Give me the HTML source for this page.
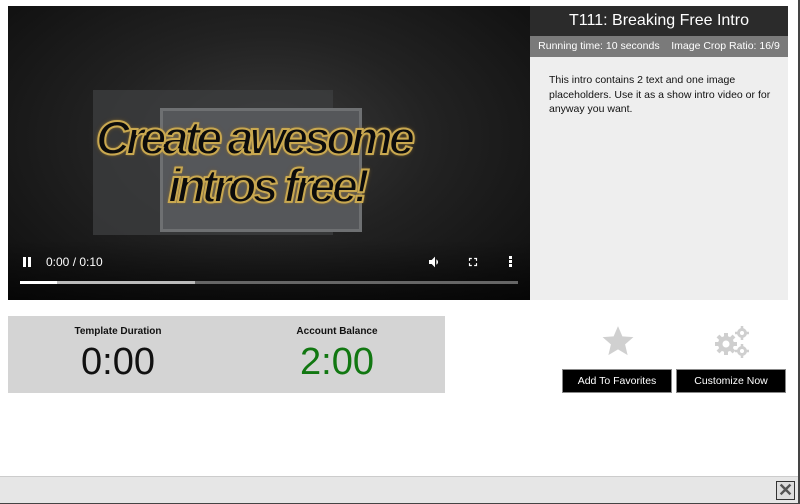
<!DOCTYPE html>
<html><head><style>
body{margin:0;width:800px;height:504px;background:#fff;font-family:"Liberation Sans",sans-serif;position:relative;overflow:hidden}
.abs{position:absolute}
.hl{font:italic bold 47px/44px 'Liberation Sans',sans-serif;color:#0c0c0c;letter-spacing:-4px;-webkit-text-stroke:2px #c9a850;text-shadow:0 0 2px #e0c070,0 0 5px #806020}
</style></head><body>
<div class="abs" style="left:0;top:0;width:798px;height:502px;border-right:2px solid #444;border-bottom:2px solid #444;box-sizing:content-box"></div>
<div class="abs" style="left:8px;top:6px;width:522px;height:294px;background:radial-gradient(ellipse at 50% 45%,#3a3a3a 0%,#222 45%,#0e0e0e 100%)"></div>
<div class="abs" style="left:93px;top:90px;width:240px;height:145px;background:#3c3d3f;opacity:.8"></div>
<div class="abs" style="left:160px;top:108px;width:196px;height:118px;background:#55575a;border:3px solid #6e7072"></div>
<div class="abs hl" style="left:96px;top:116px">Create awesome</div>
<div class="abs hl" style="left:168px;top:164px">intros free!</div>
<div class="abs" style="left:8px;top:240px;width:522px;height:60px;background:linear-gradient(transparent,rgba(0,0,0,.6))"></div>
<div class="abs" style="left:23px;top:257px;width:3px;height:10px;background:#fff"></div>
<div class="abs" style="left:28px;top:257px;width:3px;height:10px;background:#fff"></div>
<div class="abs" style="left:46px;top:255px;color:#fff;font-size:12px">0:00 / 0:10</div>
<svg class="abs" style="left:427px;top:254px" width="16" height="16" viewBox="0 0 24 24"><path fill="#fff" d="M3 9v6h4l5 5V4L7 9H3zm13.5 3A4.5 4.5 0 0014 8v8a4.5 4.5 0 002.5-4z"/></svg>
<svg class="abs" style="left:466px;top:255px" width="14" height="14" viewBox="0 0 24 24"><path fill="#fff" d="M7 14H5v5h5v-2H7v-3zm-2-4h2V7h3V5H5v5zm12 7h-3v2h5v-5h-2v3zM14 5v2h3v3h2V5h-5z"/></svg>
<div class="abs" style="left:509px;top:256px;width:3px;height:3px;background:#fff;box-shadow:0 4px #fff,0 8px #fff"></div>
<div class="abs" style="left:20px;top:281px;width:498px;height:3px;background:#666"></div>
<div class="abs" style="left:20px;top:281px;width:175px;height:3px;background:#bbb"></div>
<div class="abs" style="left:20px;top:281px;width:37px;height:3px;background:#fff"></div>
<div class="abs" style="left:530px;top:6px;width:258px;height:30px;background:#2b2b2b;color:#fff;font-size:16px;line-height:30px;text-align:center">T111: Breaking Free Intro</div>
<div class="abs" style="left:530px;top:36px;width:258px;height:21px;background:#7a7a7a;color:#fff;font-size:10.5px;line-height:21px;text-align:center">Running time: 10 seconds &nbsp;&nbsp; Image Crop Ratio: 16/9</div>
<div class="abs" style="left:530px;top:57px;width:258px;height:243px;background:#eee"></div>
<div class="abs" style="left:549px;top:73px;width:225px;color:#111;font-size:10.5px;line-height:14.5px">This intro contains 2 text and one image placeholders. Use it as a show intro video or for anyway you want.</div>
<div class="abs" style="left:8px;top:316px;width:437px;height:77px;background:#d4d4d4"></div>
<div class="abs" style="left:8px;top:326px;width:220px;text-align:center;font-size:10px;font-weight:bold;color:#111">Template Duration</div>
<div class="abs" style="left:8px;top:341px;width:220px;text-align:center;font-size:38px;color:#111">0:00</div>
<div class="abs" style="left:228px;top:326px;width:218px;text-align:center;font-size:10px;font-weight:bold;color:#111">Account Balance</div>
<div class="abs" style="left:228px;top:341px;width:218px;text-align:center;font-size:38px;color:#117711">2:00</div>
<svg class="abs" style="left:601px;top:324px" width="34" height="34" viewBox="0 0 24 24"><path fill="#d0d0d0" d="M12 1.5l3.1 7.2 7.8.6-5.9 5.1 1.8 7.6L12 17.9 5.2 22l1.8-7.6L1.1 9.3l7.8-.6z"/></svg>
<svg class="abs" style="left:712px;top:324px" width="40" height="36" viewBox="0 0 40 36">
<g fill="#cfcfcf"><circle cx="14" cy="20" r="8"/><g stroke="#cfcfcf" stroke-width="4"><line x1="14" y1="9" x2="14" y2="31"/><line x1="3" y1="20" x2="25" y2="20"/><line x1="6" y1="12" x2="22" y2="28"/><line x1="22" y1="12" x2="6" y2="28"/></g><circle cx="14" cy="20" r="3.5" fill="#fff"/>
<circle cx="30" cy="9" r="5"/><g stroke="#cfcfcf" stroke-width="2.5"><line x1="30" y1="2" x2="30" y2="16"/><line x1="23" y1="9" x2="37" y2="9"/></g><circle cx="30" cy="9" r="2" fill="#fff"/>
<circle cx="30" cy="27" r="5"/><g stroke="#cfcfcf" stroke-width="2.5"><line x1="30" y1="20" x2="30" y2="34"/><line x1="23" y1="27" x2="37" y2="27"/></g><circle cx="30" cy="27" r="2" fill="#fff"/></g></svg>
<div class="abs" style="left:562px;top:369px;width:108px;height:22px;background:#000;border:1px solid #888;color:#fff;font-size:10.5px;line-height:22px;text-align:center">Add To Favorites</div>
<div class="abs" style="left:676px;top:369px;width:108px;height:22px;background:#000;border:1px solid #888;color:#fff;font-size:10.5px;line-height:22px;text-align:center">Customize Now</div>
<div class="abs" style="left:0;top:476px;width:798px;height:26px;background:#e6e6e6;border-top:1px solid #ccc"></div>
<div class="abs" style="left:776px;top:481px;width:17px;height:17px;background:#ddd;border:1px solid #333;color:#555;font:bold 18px/17px 'Liberation Sans',sans-serif;text-align:center">✕</div>
</body></html>
